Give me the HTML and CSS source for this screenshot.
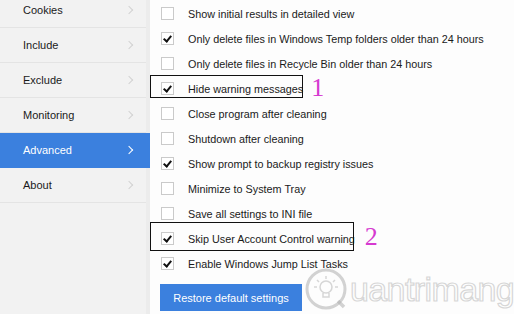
FILE: index.html
```html
<!DOCTYPE html>
<html>
<head>
<meta charset="utf-8">
<link rel="stylesheet" href="styles.css">
</head>
<body>
<div class="app">
  <nav class="side">
    <div class="item"><span>Cookies</span><span class="chev"></span></div>
    <div class="item"><span>Include</span><span class="chev"></span></div>
    <div class="item"><span>Exclude</span><span class="chev"></span></div>
    <div class="item"><span>Monitoring</span><span class="chev"></span></div>
    <div class="item active"><span>Advanced</span><span class="chev"></span></div>
    <div class="item"><span>About</span><span class="chev"></span></div>
  </nav>
  <main class="content">
    <div class="row"><span class="cb"></span><span>Show initial results in detailed view</span></div>
    <div class="row"><span class="cb on"></span><span>Only delete files in Windows Temp folders older than 24 hours</span></div>
    <div class="row"><span class="cb"></span><span>Only delete files in Recycle Bin older than 24 hours</span></div>
    <div class="row"><span class="mark mark1"></span><span class="cb on"></span><span>Hide warning messages</span><span class="num num1">1</span></div>
    <div class="row"><span class="cb"></span><span>Close program after cleaning</span></div>
    <div class="row"><span class="cb"></span><span>Shutdown after cleaning</span></div>
    <div class="row"><span class="cb on"></span><span>Show prompt to backup registry issues</span></div>
    <div class="row"><span class="cb"></span><span>Minimize to System Tray</span></div>
    <div class="row"><span class="cb"></span><span>Save all settings to INI file</span></div>
    <div class="row"><span class="mark mark2"></span><span class="cb on"></span><span>Skip User Account Control warning</span><span class="num num2">2</span></div>
    <div class="row"><span class="cb on"></span><span>Enable Windows Jump List Tasks</span></div>
    <div class="btnrow"><button class="btn">Restore default settings</button></div>
    <div class="wm">
      <svg class="bulb" width="44" height="44" viewBox="0 0 44 44">
        <circle cx="22" cy="22" r="19" fill="none" stroke="rgba(175,175,175,0.55)" stroke-width="3"/>
        <circle cx="22" cy="20" r="6" fill="none" stroke="rgba(175,175,175,0.5)" stroke-width="1.5"/>
        <path d="M19 26 v4 h6 v-4" fill="none" stroke="rgba(175,175,175,0.5)" stroke-width="1.5"/>
        <path d="M22 9 v3 M13 13 l2 2 M31 13 l-2 2 M10 20 h3 M31 20 h3" stroke="rgba(175,175,175,0.5)" stroke-width="1.5"/>
        <path d="M34 34 l6 6" stroke="rgba(175,175,175,0.55)" stroke-width="3.5"/>
      </svg>
      <span class="wmtext">uantrimang</span>
    </div>
  </main>
</div>
</body>
</html>
```
FILE: styles.css
```css
html, body {
  margin: 0;
  padding: 0;
  width: 514px;
  height: 314px;
  overflow: hidden;
  background: #fdfdfd;
  font-family: "Liberation Sans", Arial, sans-serif;
  font-size: 10.8px;
  color: #1a1a1a;
}
.app {
  display: flex;
  height: 314px;
}
.side {
  width: 146px;
  flex: none;
  background: #f2f2f2;
  border-right: 4px solid #ececec;
  margin-top: -7px;
}
.item {
  height: 34px;
  border-bottom: 1px solid #e4e4e4;
  display: flex;
  align-items: center;
  justify-content: space-between;
  padding: 0 12px 0 23px;
  font-size: 11px;
}
.item.active {
  background: #3b80de;
  color: #fff;
  margin-right: -4px;
  padding-right: 16px;
  border-bottom-color: #3b80de;
}
.chev {
  width: 5px;
  height: 5px;
  border-top: 1.5px solid #d2d2d2;
  border-right: 1.5px solid #d2d2d2;
  transform: rotate(45deg);
  margin-right: 2px;
}
.item.active .chev {
  border-color: #fff;
}
.content {
  flex: 1;
  position: relative;
  padding: 1px 0 0 11px;
}
.row {
  position: relative;
  height: 25px;
  display: flex;
  align-items: center;
  gap: 14px;
}
.cb {
  width: 11px;
  height: 11px;
  border: 1px solid #cacaca;
  background: #fff;
  flex: none;
  position: relative;
}
.cb.on::after {
  content: "";
  position: absolute;
  left: 3px;
  top: 1px;
  width: 3px;
  height: 6px;
  border-right: 2px solid #111;
  border-bottom: 2px solid #111;
  transform: rotate(40deg);
}
.mark {
  position: absolute;
  left: -11px;
  border: 1px solid #111;
}
.mark1 {
  top: -1px;
  width: 151px;
  height: 21px;
}
.mark2 {
  top: -4px;
  width: 202px;
  height: 27px;
}
.num {
  font-family: "Liberation Serif", "Times New Roman", serif;
  color: #d63ad0;
  font-size: 26px;
  line-height: 1;
  margin-left: -6px;
  margin-top: -1px;
}
.num2 {
  margin-left: -4px;
  margin-top: -4px;
}
.btnrow {
  margin-top: 8px;
}
.btn {
  background: #3b80de;
  color: #fff;
  border: none;
  font-family: "Liberation Sans", Arial, sans-serif;
  font-size: 11px;
  width: 142px;
  height: 27px;
  padding: 0;
  margin-left: -1px;
}
.wm {
  position: absolute;
  left: 154px;
  top: 267px;
  display: flex;
  align-items: center;
  gap: 2px;
}
.wmtext {
  font-family: "Liberation Sans", Arial, sans-serif;
  font-size: 34px;
  color: rgba(255,255,255,0.3);
  -webkit-text-stroke: 1.2px rgba(175,175,175,0.5);
  letter-spacing: -0.6px;
  line-height: 1;
}
```
